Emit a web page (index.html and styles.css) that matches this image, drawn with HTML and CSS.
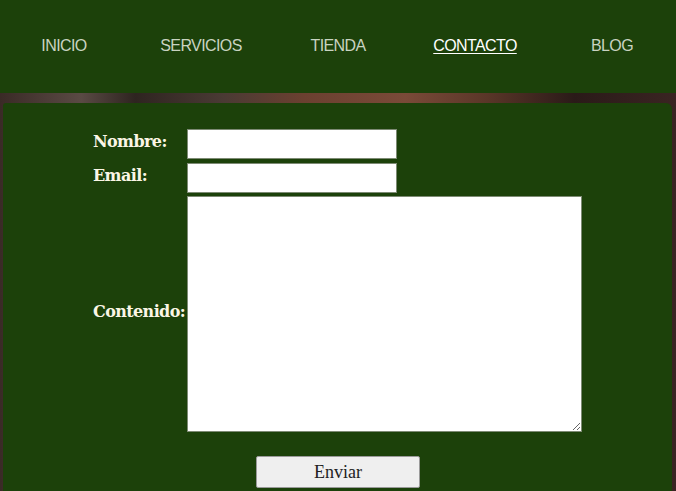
FILE: index.html
```html
<!DOCTYPE html>
<html lang="es">
<head>
  <meta charset="UTF-8">
  <meta name="viewport" content="width=device-width, initial-scale=1.0">
  <title>Contacto</title>
  <link rel="stylesheet" href="styles.css">
</head>
<body>
  <header class="topbar">
    <nav class="menu">
      <a href="#">INICIO</a>
      <a href="#">SERVICIOS</a>
      <a href="#">TIENDA</a>
      <a href="#" class="active">CONTACTO</a>
      <a href="#">BLOG</a>
    </nav>
  </header>

  <div class="hero">
    <div class="panel">
      <form class="contact-form">
        <label for="nombre">Nombre:</label>
        <input type="text" id="nombre">

        <label for="email">Email:</label>
        <input type="email" id="email">

        <label for="contenido">Contenido:</label>
        <textarea id="contenido"></textarea>
      </form>
      <div class="actions">
        <button type="button">Enviar</button>
      </div>
    </div>
  </div>
</body>
</html>
```

FILE: styles.css
```css
body {
  margin: 0;
  background-color: #1c410a;
  font-family: "Liberation Serif", serif;
}

.topbar {
  height: 93px;
  background-color: #1c410a;
  display: flex;
  align-items: center;
}

.menu {
  width: 100%;
  display: grid;
  grid-template-columns: repeat(5, 137px);
  justify-content: center;
  margin-top: -1px;
}

.menu a {
  text-align: center;
  font-family: "Liberation Sans", Arial, sans-serif;
  font-size: 16px;
  letter-spacing: -0.6px;
  color: #c9d3c1;
  text-decoration: none;
}

.menu a.active {
  color: #ffffff;
  text-decoration: underline;
  text-underline-offset: 2px;
}

/* franja de la foto de fondo */
.hero {
  padding-top: 10px;
  background: linear-gradient(90deg, #3a2a26 0%, #5a4a44 12%, #2e2420 20%, #4a3a34 33%, #6b4030 45%, #7a4a38 60%, #5a3628 72%, #2a1a18 85%, #3a2422 100%);
}

.panel {
  margin: 0 4px 0 3px;
  background-color: #1c410a;
  border-radius: 3px 6px 0 0;
  padding: 26px 0 4px;
  min-height: 380px;
}

.contact-form {
  display: grid;
  grid-template-columns: 94px auto;
  justify-content: start;
  align-items: center;
  row-gap: 4px;
  margin-left: 90px;
}

.contact-form label {
  font-family: "DejaVu Serif", serif;
  font-weight: bold;
  font-size: 16px;
  letter-spacing: -0.6px;
  color: #fbf6e6;
  margin-top: -6px;
}

.contact-form input {
  box-sizing: border-box;
  width: 210px;
  height: 30px;
  border: 1px solid #7d8a74;
  margin: 0;
  background: #fff;
}

.contact-form textarea {
  box-sizing: border-box;
  width: 395px;
  height: 236px;
  border: 1px solid #7d8a74;
  margin: -1px 0 0;
  background: #fff;
}

.actions {
  text-align: center;
  margin-top: 24px;
  padding-left: 1px;
}

.actions button {
  width: 164px;
  height: 32px;
  font-family: "Liberation Serif", serif;
  font-size: 18px;
  color: #222;
  background-color: #efefef;
  border: 1px solid #9a9a9a;
  border-radius: 2px;
}
```
